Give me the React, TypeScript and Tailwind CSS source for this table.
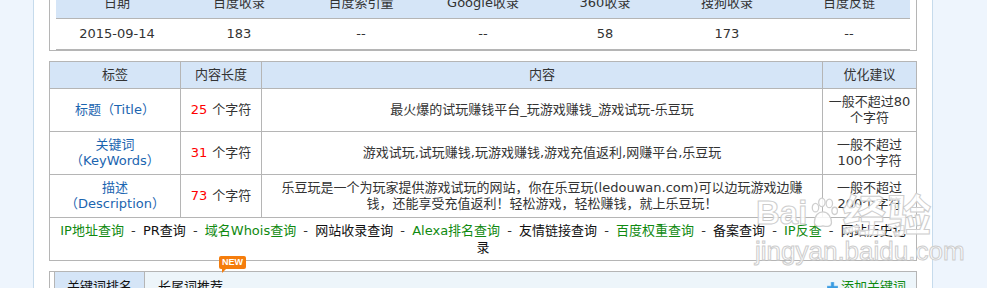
const base = "font-['DejaVu_Sans','Noto_Sans_CJK_SC',sans-serif]";

const statHeads = ["日期", "百度收录", "百度索引量", "Google收录", "360收录", "搜狗收录", "百度反链"];
const statVals = ["2015-09-14", "183", "--", "--", "58", "173", "--"];

const links: { text: React.ReactNode; green: boolean }[] = [
  { text: "IP地址查询", green: true },
  { text: "PR查询", green: false },
  { text: "域名Whois查询", green: true },
  { text: "网站收录查询", green: false },
  { text: "Alexa排名查询", green: true },
  { text: "友情链接查询", green: false },
  { text: "百度权重查询", green: true },
  { text: "备案查询", green: false },
  { text: "IP反查", green: true },
  {
    text: (
      <>
        网站历史记
        <br />录
      </>
    ),
    green: false,
  },
];

const Row = ({
  label,
  count,
  content,
  advice,
}: {
  label: React.ReactNode;
  count: number;
  content: React.ReactNode;
  advice: React.ReactNode;
}) => (
  <div className="flex h-[43px] border-b border-[#b5b5b5] text-center leading-[16px]">
    <div className="w-[131px] shrink-0 border-r border-[#b5b5b5] flex items-center justify-center text-[#1b65b0]">
      <div>{label}</div>
    </div>
    <div className="w-[81px] shrink-0 border-r border-[#b5b5b5] flex items-center justify-center">
      <span className="text-[#ff0000] mr-[5px]">{count}</span>个字符
    </div>
    <div className="w-[561px] shrink-0 border-r border-[#b5b5b5] flex items-center justify-center">
      <div>{content}</div>
    </div>
    <div className="flex-1 flex items-center justify-center">
      <div>{advice}</div>
    </div>
  </div>
);

const Paw = () => (
  <svg width="32" height="32" viewBox="0 0 30 30" className="mx-[1px]">
    <g fill="rgba(255,255,255,0.85)" stroke="#cfcfcf" strokeWidth="1.2">
      <ellipse cx="7" cy="10" rx="3" ry="4" />
      <ellipse cx="13" cy="5" rx="3" ry="4" />
      <ellipse cx="20" cy="6" rx="3" ry="4" />
      <ellipse cx="25" cy="13" rx="2.6" ry="3.4" />
      <path d="M6 24 C6 17 10 14 14 14 C19 14 22 19 22 24 C22 28 18 28 14 27 C10 28 6 28 6 24 Z" />
    </g>
  </svg>
);

export default function App() {
  return (
    <div className={`relative flex h-[288px] overflow-hidden bg-white text-[13px] text-[#333] ${base}`}>
      <div className="w-[34px] shrink-0 bg-[#eef5fd] border-r border-[#c6dbec]" />

      <div className="w-[898px] shrink-0 px-[15px] -mt-[13px]">
        {/* stats table */}
        <div className="border border-[#b5b5b5] px-[6px]">
          <div className="grid grid-cols-7 h-[31px] bg-[#d5e5f7] border-b border-[#b5b5b5] items-center text-center">
            {statHeads.map((h) => (
              <div key={h}>{h}</div>
            ))}
          </div>
          <div className="grid grid-cols-7 h-[31px] border-b border-[#b5b5b5] items-center text-center">
            {statVals.map((v, i) => (
              <div key={i}>{v}</div>
            ))}
          </div>
        </div>

        {/* meta table */}
        <div className="mt-[10px] border border-[#b5b5b5]">
          <div className="flex h-[27px] bg-[#d5e5f7] border-b border-[#b5b5b5] text-center">
            <div className="w-[131px] shrink-0 border-r border-[#b5b5b5] flex items-center justify-center">标签</div>
            <div className="w-[81px] shrink-0 border-r border-[#b5b5b5] flex items-center justify-center">内容长度</div>
            <div className="w-[561px] shrink-0 border-r border-[#b5b5b5] flex items-center justify-center">内容</div>
            <div className="flex-1 flex items-center justify-center">优化建议</div>
          </div>
          <Row
            label="标题（Title）"
            count={25}
            content="最火爆的试玩赚钱平台_玩游戏赚钱_游戏试玩-乐豆玩"
            advice={
              <>
                一般不超过80
                <br />个字符
              </>
            }
          />
          <Row
            label={
              <>
                关键词
                <br />（KeyWords）
              </>
            }
            count={31}
            content="游戏试玩,试玩赚钱,玩游戏赚钱,游戏充值返利,网赚平台,乐豆玩"
            advice={
              <>
                一般不超过
                <br />
                100个字符
              </>
            }
          />
          <Row
            label={
              <>
                描述
                <br />（Description）
              </>
            }
            count={73}
            content={
              <>
                乐豆玩是一个为玩家提供游戏试玩的网站，你在乐豆玩(ledouwan.com)可以边玩游戏边赚
                <br />
                钱，还能享受充值返利！轻松游戏，轻松赚钱，就上乐豆玩！
              </>
            }
            advice={
              <>
                一般不超过
                <br />
                200个字符
              </>
            }
          />
          <div className="h-[42px] flex items-center justify-center text-center leading-[17px]">
            <div>
              {links.map((l, i) => (
                <span key={i}>
                  {i > 0 && <span className="mx-[3px] text-[#333]"> - </span>}
                  <a className={l.green ? "text-[#108a10]" : "text-[#111]"}>{l.text}</a>
                </span>
              ))}
            </div>
          </div>
        </div>

        {/* keyword tabs */}
        <div className="mt-[10px] border border-[#b5b5b5] pl-[4px]">
          <div className="flex h-[30px] border-l border-[#b5b5b5] bg-[#edf5fa] items-center">
            <div className="w-[90px] h-full bg-[#d5e5f7] border-r border-[#b5b5b5] flex items-center justify-center text-[#111]">
              关键词排名
            </div>
            <div className="relative ml-[13px] text-[#111]">
              长尾词推荐
              <span className="absolute -top-[21px] left-[61px] h-[13px] px-[3px] rounded-[2px] bg-[#f57d0c] text-white text-[9px] leading-[13px] font-bold font-['Liberation_Sans',sans-serif]">
                NEW
                <span className="absolute left-[3px] -bottom-[4px] border-t-[4px] border-t-[#f57d0c] border-r-[4px] border-r-transparent" />
              </span>
            </div>
            <div className="ml-auto mr-[10px] flex items-center gap-[3px] text-[#108a10]">
              <svg width="11" height="11" viewBox="0 0 11 11">
                <path d="M4 0h3v4h4v3H7v4H4V7H0V4h4z" fill="#3a9be0" stroke="#8cc8f0" strokeWidth="0.6" />
              </svg>
              添加关键词
            </div>
          </div>
        </div>
      </div>

      <div className="flex-1 bg-[#eef5fd] border-l border-[#c6dbec]" />

      {/* watermark */}
      <div className="pointer-events-none absolute left-[756px] top-[194px] font-['Liberation_Sans',sans-serif] text-[rgba(255,255,255,0.85)] [-webkit-text-stroke:1px_#cdcdcd]">
        <div className="flex items-center h-[38px] text-[33px] leading-[38px] font-bold">
          Bai
          <Paw />
          <span className="font-['Noto_Sans_CJK_SC',sans-serif] text-[44px] leading-[38px] tracking-[1px] ml-[1px]">经验</span>
        </div>
        <div className="text-[26px] leading-[26px] mt-[6px] -ml-[1px]">jingyan.baidu.com</div>
      </div>
    </div>
  );
}
